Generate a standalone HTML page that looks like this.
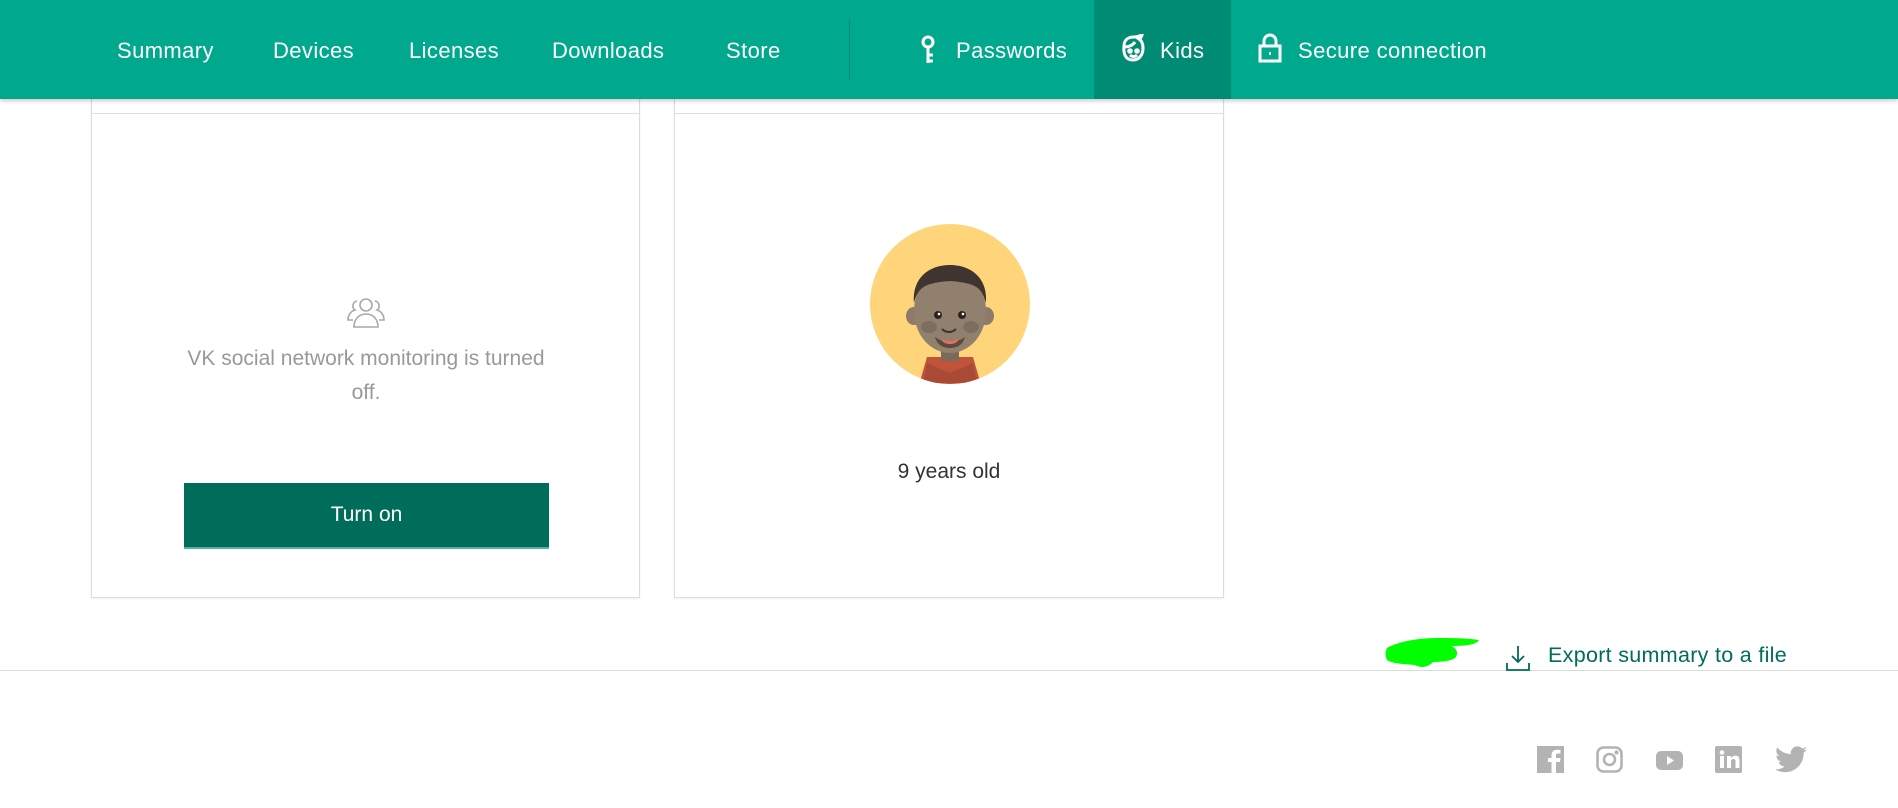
<!DOCTYPE html>
<html><head><meta charset="utf-8"><style>
*{margin:0;padding:0;box-sizing:border-box}
body{width:1898px;height:808px;background:#fff;position:relative;overflow:hidden;font-family:"Liberation Sans",sans-serif}
.hdr{position:absolute;left:0;top:0;width:1898px;height:99px;background:#00a88e;box-shadow:0 2px 4px rgba(0,0,0,.2);z-index:5}
.hdr span{position:absolute;top:38px;color:#fff;font-size:22px;line-height:26px;letter-spacing:.4px}
.kids{position:absolute;left:1094px;top:0;width:137px;height:99px;background:#008b75}
.div{position:absolute;left:849px;top:19px;width:1px;height:61px;background:#0b8a75}
.card{position:absolute;top:60px;height:538px;border:1px solid #dcdcdc;background:#fff;box-shadow:0 1px 2px rgba(0,0,0,.06)}
.card .ln{position:absolute;left:0;right:0;top:52px;height:1px;background:#e2dde2}
.btn{position:absolute;left:92px;top:422px;width:365px;height:66px;background:#006c5a;border-bottom:2px solid #4fb3a0;color:#fff;font-size:21px;text-align:center;line-height:64px}
.social svg{position:absolute;top:746px}
</style></head><body>
<div class="hdr">
<div class="kids"></div>
<span style="left:117px">Summary</span>
<span style="left:273px">Devices</span>
<span style="left:409px">Licenses</span>
<span style="left:552px">Downloads</span>
<span style="left:726px">Store</span>
<div class="div"></div>
<svg style="position:absolute;left:920px;top:35px" width="16" height="30" viewBox="0 0 16 30" fill="none" stroke="#fff" stroke-width="3"><circle cx="8" cy="7" r="5"/><path d="M8 12v16M8 20h5M8 26h5"/></svg>
<span style="left:956px">Passwords</span>
<svg style="position:absolute;left:1120px;top:34px" width="26" height="30" viewBox="0 0 26 30" fill="none" stroke="#fff" stroke-width="3"><path d="M4 12c0-6 4-9 10-9 4 0 7-2 8-2-1 3-2 4-3 4 3 2 4 5 4 9 0 7-4 12-10 12S3 22 4 12z"/><path d="M5 13c4 0 8-2 10-5"/><circle cx="10" cy="17" r="1.3" fill="#fff"/><circle cx="17" cy="17" r="1.3" fill="#fff"/><path d="M10 21c2 2 5 2 7 0"/></svg>
<span style="left:1160px">Kids</span>
<svg style="position:absolute;left:1258px;top:33px" width="24" height="30" viewBox="0 0 24 30" fill="none" stroke="#fff" stroke-width="3"><path d="M6 13V8a6 6 0 0 1 12 0v5"/><rect x="2" y="13" width="20" height="15"/><rect x="11" y="19" width="2" height="3" fill="#fff" stroke="none"/></svg>
<span style="left:1298px">Secure connection</span>
</div>

<div class="card" style="left:91px;width:549px">
<div class="ln"></div>
<svg style="position:absolute;left:254px;top:234px" width="40" height="34" viewBox="0 0 40 34" fill="none" stroke="#a8a8a8" stroke-width="1.6"><circle cx="20" cy="10" r="6"/><path d="M8 32c0-8 5-13 12-13s12 5 12 13z"/><path d="M11 6a5 5 0 0 0-2 9c-4 1-7 5-7 10h5"/><path d="M29 6a5 5 0 0 1 2 9c4 1 7 5 7 10h-5"/></svg>
<div style="position:absolute;left:79px;width:390px;top:281px;text-align:center;color:#999;font-size:21px;line-height:34px">VK social network monitoring is turned off.</div>
<div class="btn">Turn on</div>
</div>

<div class="card" style="left:674px;width:550px">
<div class="ln"></div>
<svg style="position:absolute;left:194px;top:162px" width="162" height="162" viewBox="0 0 162 162">
<defs><clipPath id="c"><circle cx="81" cy="81" r="80"/></clipPath></defs>
<circle cx="81" cy="81" r="80" fill="#fed57a"/>
<g clip-path="url(#c)">
<path d="M50 162l8-28h46l8 28z" fill="#c0533a"/>
<path d="M58 140l23 10 23-10 4 20H54z" fill="#a84a35"/>
<rect x="72" y="118" width="18" height="20" fill="#7a6a5a"/>
<ellipse cx="45" cy="93" rx="8" ry="9" fill="#8d7a6a"/><ellipse cx="117" cy="93" rx="8" ry="9" fill="#8d7a6a"/>
<ellipse cx="81" cy="88" rx="36" ry="42" fill="#91806d"/>
<path d="M45 80c-2-26 16-38 36-38s38 12 36 38c-4-14-8-20-36-22-28 2-32 8-36 22z" fill="#3f3430"/>
<circle cx="69" cy="92" r="4" fill="#2a2320"/><circle cx="93" cy="92" r="4" fill="#2a2320"/>
<circle cx="70" cy="91" r="1.3" fill="#fff"/><circle cx="94" cy="91" r="1.3" fill="#fff"/>
<ellipse cx="60" cy="104" rx="8" ry="6" fill="#7d6e60"/><ellipse cx="102" cy="104" rx="8" ry="6" fill="#7d6e60"/>
<path d="M73 106c4 4 10 4 14 0" stroke="#3f3430" stroke-width="2" fill="none"/>
<path d="M66 114c8 6 22 6 30 0-2 8-8 11-15 11s-13-3-15-11z" fill="#5b4a40"/>
<path d="M72 116c6 3 12 3 18 0-2 4-5 5-9 5s-7-1-9-5z" fill="#e96f5c"/>
</g></svg>
<div style="position:absolute;left:0;right:0;top:399px;text-align:center;color:#333;font-size:21px">9 years old</div>
</div>

<div style="position:absolute;left:0;top:670px;width:1898px;height:1px;background:#dadada"></div>
<svg style="position:absolute;left:1385px;top:636px" width="96" height="40" viewBox="0 0 96 40"><path d="M2 12c10-6 30-10 50-10 14 0 30 0 42 2-2 4-10 6-28 6 6 2 8 8 4 12-4 3-14 4-22 4-6 6-12 6-18 3-10-1-22-1-28-5-2-4-2-8 0-12z" fill="#00ff00"/></svg>
<svg style="position:absolute;left:1505px;top:644px" width="26" height="28" viewBox="0 0 26 28" fill="none" stroke="#006c5a" stroke-width="1.8"><path d="M13 2v16M7 12l6 6 6-6M2 19v7h22v-7"/></svg>
<div style="position:absolute;left:1548px;top:643px;color:#006c5a;font-size:21.5px;letter-spacing:.3px">Export summary to a file</div>

<div class="social">
<svg style="left:1537px" width="27" height="27" viewBox="0 0 27 27"><rect width="27" height="27" fill="#b3b3b3"/><path d="M19 27V16h4l.5-4H19V9.5c0-1.2.4-2 2-2h2.5V4c-.5 0-2-.2-3.5-.2-3.5 0-5.5 2-5.5 5.8V12H11v4h3.5v11z" fill="#fff"/></svg>
<svg style="left:1596px" width="27" height="27" viewBox="0 0 27 27" fill="none" stroke="#b3b3b3" stroke-width="2.6"><rect x="1.5" y="1.5" width="24" height="24" rx="6"/><circle cx="13.5" cy="13.5" r="5.5"/><circle cx="20.5" cy="6.5" r=".8" fill="#b3b3b3"/></svg>
<svg style="left:1656px;top:751px" width="27" height="19" viewBox="0 0 27 19"><rect width="27" height="19" rx="5" fill="#b3b3b3"/><path d="M11 5l7 4.5-7 4.5z" fill="#fff"/></svg>
<svg style="left:1715px" width="27" height="27" viewBox="0 0 27 27"><rect width="27" height="27" rx="2" fill="#b3b3b3"/><rect x="5" y="10" width="4" height="12" fill="#fff"/><circle cx="7" cy="6.5" r="2.3" fill="#fff"/><path d="M12 10h4v2c1-1.5 2.5-2.4 4.5-2.4 3 0 4 2 4 5V22h-4v-6.5c0-1.5-.5-2.5-2-2.5s-2.5 1-2.5 2.5V22h-4z" fill="#fff"/></svg>
<svg style="left:1775px" width="32" height="27" viewBox="0 0 24 20"><path d="M24 2.4c-.9.4-1.8.7-2.8.8 1-.6 1.8-1.6 2.2-2.7-1 .6-2 1-3.1 1.2A4.9 4.9 0 0 0 11.9 6 14 14 0 0 1 1.7.9a4.9 4.9 0 0 0 1.5 6.6c-.8 0-1.600-.2-2.2-.6 0 2.4 1.7 4.4 3.9 4.8-.7.2-1.5.2-2.2.1.6 2 2.4 3.4 4.6 3.4A9.9 9.9 0 0 1 0 17.3 14 14 0 0 0 7.5 19.5c9.1 0 14-7.5 14-14v-.6c1-.7 1.8-1.6 2.5-2.5z" fill="#b3b3b3"/></svg>
</div>
</body></html>
